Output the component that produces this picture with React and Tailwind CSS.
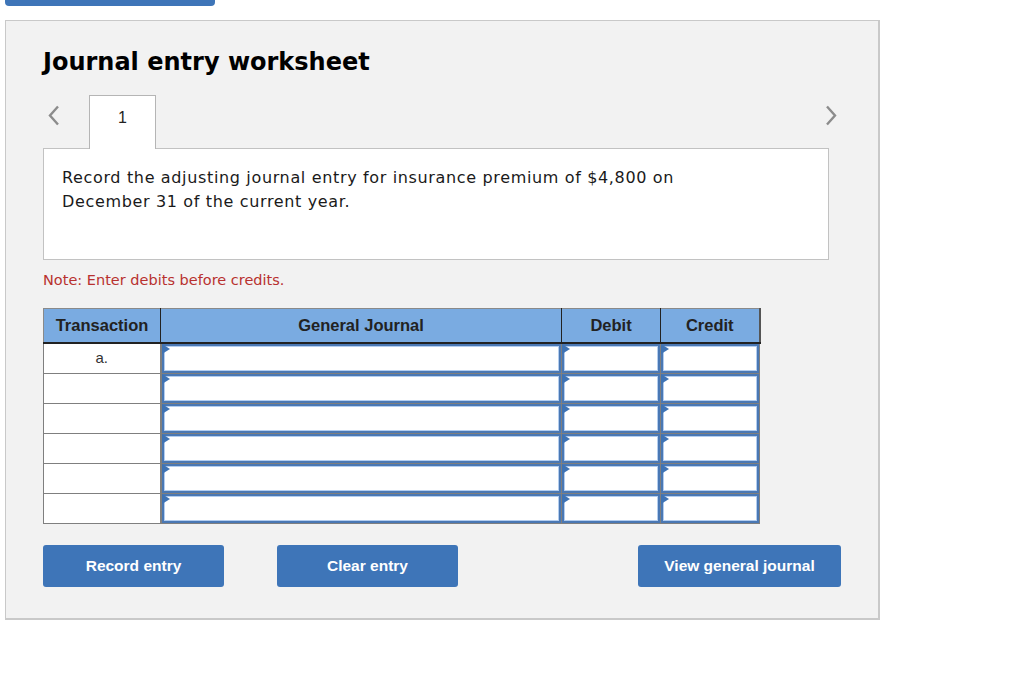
const ROWS = ["a.", "", "", "", "", ""];

function Chevron({ dir = "left" }) {
  return (
    <svg width="13" height="21" viewBox="0 0 13 21" fill="none" className="block">
      <polyline
        points={dir === "left" ? "11,1.5 3,10.5 11,19.5" : "2,1.5 10,10.5 2,19.5"}
        stroke="#8c8c8c"
        strokeWidth="2.4"
        strokeLinejoin="miter"
      />
    </svg>
  );
}

function EntryCell() {
  return (
    <td className="border border-[#7f7f7f] p-0 bg-white">
      <div className="relative h-[29px] border-2 border-[#4a78b4] shadow-[inset_0_0_0_1px_#b3cdef]">
        <span className="absolute -left-[2px] -top-[2px] w-0 h-0 border-y-[5px] border-y-transparent border-l-[8px] border-l-[#3f73b4]" />
      </div>
    </td>
  );
}

function ActionButton({ children, className = "" }) {
  return (
    <button
      className={
        "h-[42px] rounded-[3px] bg-[#3e75b8] text-white font-bold text-[15.5px] font-['Liberation_Sans',Arial,sans-serif] " +
        className
      }
    >
      {children}
    </button>
  );
}

export default function App() {
  return (
    <div className="min-h-[684px] bg-white font-['DejaVu_Sans',Verdana,sans-serif] text-[#222]">
      <div className="ml-[5px] w-[210px] h-[6px] rounded-b-[4px] bg-[#3e75b8]" />

      <div className="ml-[5px] mt-[14px] w-[875px] h-[600px] border border-[#c9c9c9] border-r-2 border-b-2 bg-[#f2f2f2] pl-[37px]">
        <h2 className="pt-[26px] text-[24px] leading-[30px] font-bold text-black">
          Journal entry worksheet
        </h2>

        <div className="mt-[18px] w-[795px] flex items-end justify-between">
          <div className="flex items-end">
            <div className="w-[46px] h-[53px] pl-[4px] pt-[10px]">
              <Chevron dir="left" />
            </div>
            <div className="relative z-10 -mb-px w-[67px] h-[54px] border border-b-0 border-[#b5b5b5] bg-white text-center pt-[10px] text-[16px] font-['Liberation_Sans',Arial,sans-serif]">
              1
            </div>
          </div>
          <div className="h-[53px] pt-[10px]">
            <Chevron dir="right" />
          </div>
        </div>

        <div className="w-[786px] h-[112px] border border-[#c2c2c2] bg-white px-[18px] pt-[17px]">
          <p className="max-w-[640px] text-[16px] tracking-[0.65px] leading-[24px] text-[#1a1a1a]">
            Record the adjusting journal entry for insurance premium of $4,800 on December 31 of the current year.
          </p>
        </div>

        <p className="mt-[11px] text-[14.5px] leading-[18px] text-[#b8312f]">
          Note: Enter debits before credits.
        </p>

        <table className="mt-[19px] border-collapse font-['Liberation_Sans',Arial,sans-serif]">
          <colgroup>
            <col className="w-[117px]" />
            <col className="w-[401px]" />
            <col className="w-[99px]" />
            <col className="w-[99px]" />
          </colgroup>
          <thead>
            <tr className="h-[34px] bg-[#7aabe1] text-[16.5px] font-bold text-[#222]">
              <th className="border border-[#8a8a8a] border-b-2 border-b-[#222] border-r-[#222]">Transaction</th>
              <th className="border border-[#222] border-b-2 border-t-[#8a8a8a]">General Journal</th>
              <th className="border border-[#222] border-b-2 border-t-[#8a8a8a]">Debit</th>
              <th className="border border-[#222] border-b-2 border-t-[#8a8a8a] border-r-2 border-r-[#555]">Credit</th>
            </tr>
          </thead>
          <tbody>
            {ROWS.map((label, i) => (
              <tr key={i} className="h-[30px]">
                <td className="border border-[#7f7f7f] border-r-2 bg-white text-center text-[15px] text-[#333] p-0">
                  {label}
                </td>
                <EntryCell />
                <EntryCell />
                <EntryCell />
              </tr>
            ))}
          </tbody>
        </table>

        <div className="mt-[21px] flex">
          <ActionButton className="w-[181px]">Record entry</ActionButton>
          <ActionButton className="ml-[53px] w-[181px]">Clear entry</ActionButton>
          <ActionButton className="ml-[180px] w-[203px]">View general journal</ActionButton>
        </div>
      </div>
    </div>
  );
}
